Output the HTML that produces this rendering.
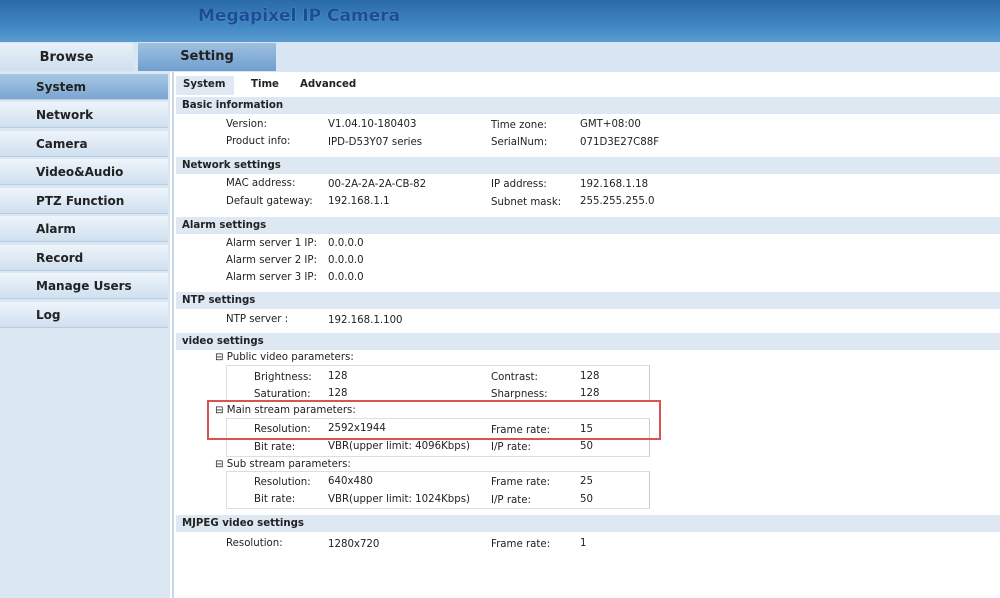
<!DOCTYPE html><html><head><style>
*{margin:0;padding:0;box-sizing:border-box}
body{width:1000px;height:598px;overflow:hidden;background:#fff;font-family:"DejaVu Sans","Liberation Sans",sans-serif;font-size:10.2px;color:#222;position:relative}
.a{position:absolute;white-space:nowrap}
.hdr{left:0;top:0;width:1000px;height:42px;background:linear-gradient(#2a6aa8,#3f86c2 60%,#5a9bd0)}
.title{left:198px;top:6px;font:bold 17px "DejaVu Sans",sans-serif;color:#1b4d96;text-shadow:0 0 1px #8fb8e0}
.tabbar{left:0;top:42px;width:1000px;height:30px;background:#d8e6f3}
.tab{top:43px;height:28px;font-weight:bold;font-size:13px;text-align:center;line-height:30px}
.side{left:0;top:72px;width:170px;height:526px;background:#dbe7f3}
.si{left:0;width:168px;height:26px;background:linear-gradient(#eef4fa,#cfe0f0);border-bottom:1px solid #b8cde2;font-weight:bold;font-size:12px;line-height:26px;padding-left:36px}
.sec{left:176px;width:824px;height:17px;background:#dde8f3;font-weight:bold;padding-left:6px;line-height:17px}
.box{border:1px solid #ddd;border-right-color:#ccc}
</style></head><body>
<div class="a hdr"></div>
<div class="a title">Megapixel IP Camera</div>
<div class="a tabbar"></div>
<div class="a tab" style="left:0;width:133px;background:linear-gradient(#e8f0f8,#cfdfef)">Browse</div>
<div class="a tab" style="left:138px;width:138px;background:linear-gradient(#9fc0e0,#6f9fcf);line-height:28px">Setting</div>
<div class="a side"></div>
<div class="a si" style="top:74px;background:linear-gradient(#a8c6e4,#7aa6d2)">System</div>
<div class="a si" style="top:102px">Network</div>
<div class="a si" style="top:131px">Camera</div>
<div class="a si" style="top:159px">Video&amp;Audio</div>
<div class="a si" style="top:188px">PTZ Function</div>
<div class="a si" style="top:216px">Alarm</div>
<div class="a si" style="top:245px">Record</div>
<div class="a si" style="top:273px">Manage Users</div>
<div class="a si" style="top:302px">Log</div>
<div class="a" style="left:172px;top:72px;width:828px;height:526px;background:#fff;border-left:2px solid #c8d8e8"></div>
<div class="a" style="left:176px;top:76px;width:58px;height:19px;background:#dfe9f4"></div>
<div class="a" style="left:183px;top:79px;font-weight:bold">System</div>
<div class="a" style="left:251px;top:79px;font-weight:bold">Time</div>
<div class="a" style="left:300px;top:79px;font-weight:bold">Advanced</div>

<div class="a sec" style="top:97px">Basic information</div>
<div class="a" style="left:226px;top:119px">Version:</div><div class="a" style="left:328px;top:119px">V1.04.10-180403</div>
<div class="a" style="left:491px;top:120px">Time zone:</div><div class="a" style="left:580px;top:119px">GMT+08:00</div>
<div class="a" style="left:226px;top:136px">Product info:</div><div class="a" style="left:328px;top:137px">IPD-D53Y07 series</div>
<div class="a" style="left:491px;top:137px">SerialNum:</div><div class="a" style="left:580px;top:137px">071D3E27C88F</div>

<div class="a sec" style="top:157px">Network settings</div>
<div class="a" style="left:226px;top:178px">MAC address:</div><div class="a" style="left:328px;top:179px">00-2A-2A-2A-CB-82</div>
<div class="a" style="left:491px;top:179px">IP address:</div><div class="a" style="left:580px;top:179px">192.168.1.18</div>
<div class="a" style="left:226px;top:196px">Default gateway:</div><div class="a" style="left:328px;top:196px">192.168.1.1</div>
<div class="a" style="left:491px;top:197px">Subnet mask:</div><div class="a" style="left:580px;top:196px">255.255.255.0</div>

<div class="a sec" style="top:217px">Alarm settings</div>
<div class="a" style="left:226px;top:238px">Alarm server 1 IP:</div><div class="a" style="left:328px;top:238px">0.0.0.0</div>
<div class="a" style="left:226px;top:255px">Alarm server 2 IP:</div><div class="a" style="left:328px;top:255px">0.0.0.0</div>
<div class="a" style="left:226px;top:272px">Alarm server 3 IP:</div><div class="a" style="left:328px;top:272px">0.0.0.0</div>

<div class="a sec" style="top:292px">NTP settings</div>
<div class="a" style="left:226px;top:314px">NTP server :</div><div class="a" style="left:328px;top:315px">192.168.1.100</div>

<div class="a sec" style="top:333px">video settings</div>
<div class="a" style="left:215px;top:352px">⊟ Public video parameters:</div>
<div class="a box" style="left:226px;top:365px;width:424px;height:36px"></div>
<div class="a" style="left:254px;top:372px">Brightness:</div><div class="a" style="left:328px;top:371px">128</div>
<div class="a" style="left:491px;top:372px">Contrast:</div><div class="a" style="left:580px;top:371px">128</div>
<div class="a" style="left:254px;top:389px">Saturation:</div><div class="a" style="left:328px;top:388px">128</div>
<div class="a" style="left:491px;top:389px">Sharpness:</div><div class="a" style="left:580px;top:388px">128</div>
<div class="a" style="left:215px;top:405px">⊟ Main stream parameters:</div>
<div class="a box" style="left:226px;top:418px;width:424px;height:39px"></div>
<div class="a" style="left:254px;top:424px">Resolution:</div><div class="a" style="left:328px;top:423px">2592x1944</div>
<div class="a" style="left:491px;top:425px">Frame rate:</div><div class="a" style="left:580px;top:424px">15</div>
<div class="a" style="left:254px;top:442px">Bit rate:</div><div class="a" style="left:328px;top:441px">VBR(upper limit: 4096Kbps)</div>
<div class="a" style="left:491px;top:442px">I/P rate:</div><div class="a" style="left:580px;top:441px">50</div>
<div class="a" style="left:207px;top:400px;width:454px;height:40px;border:2px solid #d9534f"></div>
<div class="a" style="left:215px;top:459px">⊟ Sub stream parameters:</div>
<div class="a box" style="left:226px;top:471px;width:424px;height:38px"></div>
<div class="a" style="left:254px;top:477px">Resolution:</div><div class="a" style="left:328px;top:476px">640x480</div>
<div class="a" style="left:491px;top:477px">Frame rate:</div><div class="a" style="left:580px;top:476px">25</div>
<div class="a" style="left:254px;top:494px">Bit rate:</div><div class="a" style="left:328px;top:494px">VBR(upper limit: 1024Kbps)</div>
<div class="a" style="left:491px;top:495px">I/P rate:</div><div class="a" style="left:580px;top:494px">50</div>

<div class="a sec" style="top:515px">MJPEG video settings</div>
<div class="a" style="left:226px;top:538px">Resolution:</div><div class="a" style="left:328px;top:539px">1280x720</div>
<div class="a" style="left:491px;top:539px">Frame rate:</div><div class="a" style="left:580px;top:538px">1</div>
</body></html>
